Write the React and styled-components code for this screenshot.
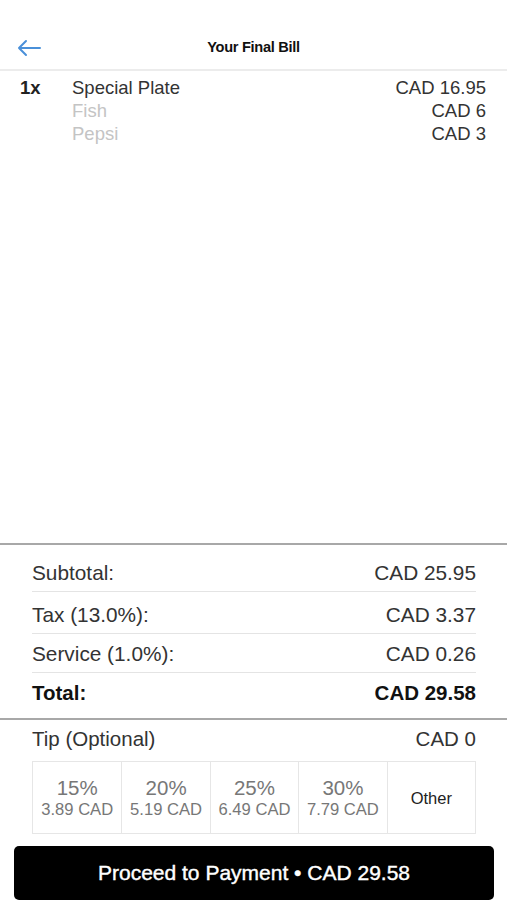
import React from 'react'
import styled, { createGlobalStyle } from 'styled-components'

const Global = createGlobalStyle`
  html, body { margin: 0; padding: 0; background: #fff; }
  body { font-family: "Liberation Sans", Arial, sans-serif; color: #222; }
`

const Page = styled.div`
  height: 900px;
  display: flex;
  flex-direction: column;
  overflow: hidden;
`

const Header = styled.div`
  height: 71px;
  padding: 36px 14px 0 16px;
  box-sizing: border-box;
  border-bottom: 2px solid #ececec;
  position: relative;
`

const Back = styled.div`
  width: 30px;
  height: 24px;
  display: flex;
  align-items: center;
`

const Title = styled.div`
  position: absolute;
  left: 0;
  right: 0;
  top: 38px;
  line-height: 18px;
  text-align: center;
  font-size: 14.6px;
  font-weight: 600;
  letter-spacing: -0.3px;
  color: #111;
  pointer-events: none;
`

const Items = styled.div`
  flex: 1;
  padding: 5px 21px 0 20px;
`

const ItemRow = styled.div`
  display: flex;
  font-size: 18.5px;
  line-height: 23px;
`

const Qty = styled.div`
  width: 52px;
  font-weight: 600;
`

const Lines = styled.div`
  flex: 1;
`

const Line = styled.div`
  display: flex;
  justify-content: space-between;
  color: ${p => (p.sub ? '#c4c4c4' : '#333')};
`

const Price = styled.span`
  color: #333;
`

const Summary = styled.div`
  border-top: 2px solid #a8a8a8;
  padding: 0 31px 0 32px;
`

const SumRow = styled.div`
  display: flex;
  justify-content: space-between;
  font-size: ${p => (p.bold ? 20.5 : 20.8)}px;
  line-height: 22px;
  font-weight: ${p => (p.bold ? 700 : 400)};
  color: ${p => (p.bold ? '#111' : '#333')};
  padding: ${p => p.pt}px 0 ${p => p.pb}px;
  border-bottom: ${p => (p.line ? '1px solid #e4e4e4' : 'none')};
`

const TipSection = styled.div`
  border-top: 2px solid #a8a8a8;
  padding: 7px 31px 0 32px;
`

const TipHead = styled.div`
  display: flex;
  justify-content: space-between;
  font-size: 20.5px;
  color: #333;
  height: 24px;
  align-items: center;
`

const TipGrid = styled.div`
  margin-top: 10px;
  display: grid;
  grid-template-columns: repeat(5, 1fr);
  border: 1px solid #e6e6e6;
  height: 71px;
`

const TipCell = styled.div`
  display: flex;
  flex-direction: column;
  align-items: center;
  justify-content: center;
  padding-top: 2px;
  border-left: ${p => (p.first ? 'none' : '1px solid #e6e6e6')};
  color: #777;
`

const Pct = styled.div`
  font-size: 20.5px;
  line-height: 22px;
`

const Amt = styled.div`
  font-size: 16.6px;
  line-height: 22px;
`

const Other = styled.div`
  font-size: 16.5px;
  color: #222;
`

const PayButton = styled.button`
  margin: 12px 13px 0 14px;
  height: 54px;
  background: #000;
  color: #fff;
  border: none;
  border-radius: 5px;
  font-family: inherit;
  font-size: 21px;
  -webkit-text-stroke: 0.4px #fff;
  padding: 0 0 1px;
`

const tips = [
  { pct: '15%', amt: '3.89 CAD' },
  { pct: '20%', amt: '5.19 CAD' },
  { pct: '25%', amt: '6.49 CAD' },
  { pct: '30%', amt: '7.79 CAD' },
]

const App = () => {
  return (
    <Page>
      <Global />
      <Header>
        <Back>
          <svg width="26" height="18" viewBox="0 0 26 18" fill="none" stroke="#4a90d9" strokeWidth="2" strokeLinecap="round" strokeLinejoin="round">
            <path d="M24 9H3M10 2L3 9l7 7" />
          </svg>
        </Back>
        <Title>Your Final Bill</Title>
      </Header>
      <Items>
        <ItemRow>
          <Qty>1x</Qty>
          <Lines>
            <Line>Special Plate<Price>CAD 16.95</Price></Line>
            <Line sub>Fish<Price>CAD 6</Price></Line>
            <Line sub>Pepsi<Price>CAD 3</Price></Line>
          </Lines>
        </ItemRow>
      </Items>
      <Summary>
        <SumRow pt={17} pb={7} line><span>Subtotal:</span><span>CAD 25.95</span></SumRow>
        <SumRow pt={12} pb={7} line><span>Tax (13.0%):</span><span>CAD 3.37</span></SumRow>
        <SumRow pt={9} pb={7} line><span>Service (1.0%):</span><span>CAD 0.26</span></SumRow>
        <SumRow pt={9} pb={14} bold><span>Total:</span><span>CAD 29.58</span></SumRow>
      </Summary>
      <TipSection>
        <TipHead><span>Tip (Optional)</span><span>CAD 0</span></TipHead>
        <TipGrid>
          {tips.map((t, i) => (
            <TipCell key={t.pct} first={i === 0}>
              <Pct>{t.pct}</Pct>
              <Amt>{t.amt}</Amt>
            </TipCell>
          ))}
          <TipCell>
            <Other>Other</Other>
          </TipCell>
        </TipGrid>
      </TipSection>
      <PayButton>Proceed to Payment • CAD 29.58</PayButton>
    </Page>
  )
}

export default App
